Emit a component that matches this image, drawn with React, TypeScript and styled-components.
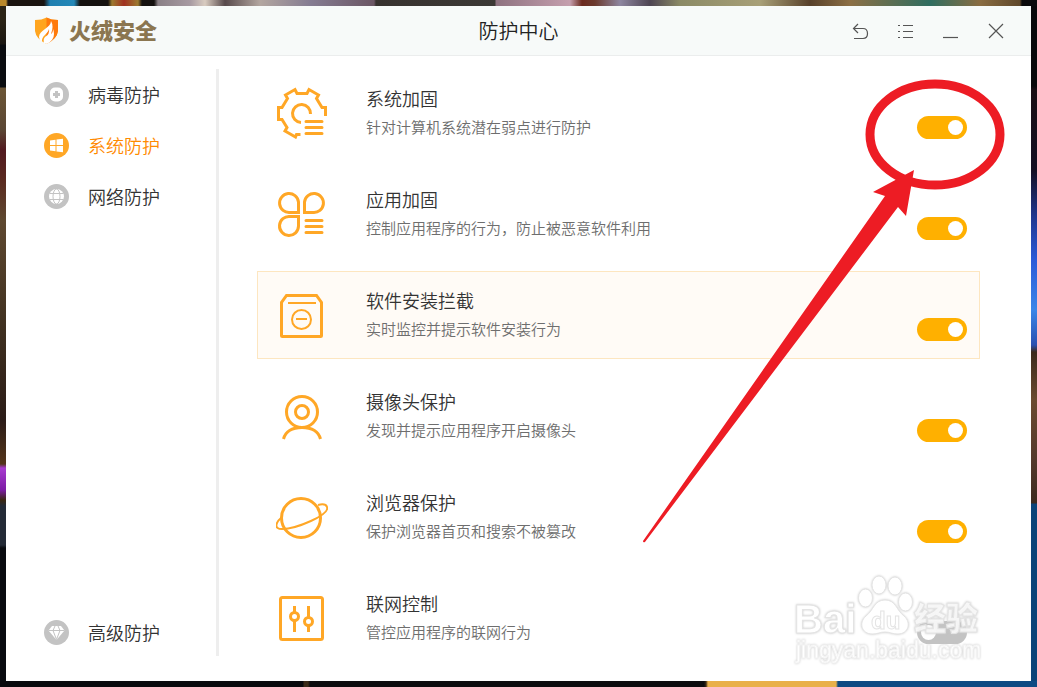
import React, { useState } from "react";
import styled, { createGlobalStyle } from "styled-components";

const GlobalStyle = createGlobalStyle`
  *, *::before, *::after { box-sizing: border-box; }
  body {
    margin: 0;
    font-family: "Noto Sans CJK SC", "Microsoft YaHei", sans-serif;
    font-weight: 350;
    color: #333;
  }
  button { font: inherit; color: inherit; border: 0; padding: 0; background: none; cursor: pointer; }
`;

const Desktop = styled.div`
  min-height: 100vh;
  padding: 6px;
  display: flex;
  background:
    linear-gradient(90deg, #b9882a 0 6px, #1a1410 8px 44px, #1f7fb0 50px, #2388b8 74px, #14110f 80px 108px, #9c7a30 112px, #a03020 124px, #9c7a30 138px, #14110f 142px 154px, #8a8086 158px, #a79aa2 190px, #d8cbc0 205px, #584a4c 225px, #b3a6a0 260px, #857c92 310px, #6b5664 374px, #37322f 376px, #3c3936 495px, #8e7280 496px, #c59fae 570px, #6b2a1e 582px, #6b3a2e 595px, #8e86a0 620px, #4e4553 650px, #8b8a66 680px, #a8a078 760px, #57402a 810px, #8c6f45 850px, #2f6d60 930px, #8a6c42 980px, #5f482b 1020px, #0a0a0c 1022px) top / 100% 6px no-repeat,
    linear-gradient(90deg, #08090d 0 303px, #3a2a18 304px 308px, #0c0c0e 310px 704px, #3a2a16 706px, #e9b04a 708px 836px, #0e4a83 838px 100%) bottom / 100% 6px no-repeat,
    linear-gradient(#2b2416 0 20px, #1b1712 44px, #0a0c10 45px 87px, #6b5535 88px, #5a4634 130px, #521a20 150px, #5a2a20 180px, #5e4830 220px, #3f3020 330px, #2b1c18 420px, #54351a 464px, #a83cd0 468px, #7c1ca4 490px, #3a2712 500px, #232a36 506px 545px, #090b0f 548px 100%) left / 6px 100% no-repeat,
    linear-gradient(#08080a 0 86px, #1a0e14 90px, #140f22 170px, #20358c 215px, #2c5ad8 260px, #3b86e8 310px, #2a50b0 345px, #3c2a1c 352px, #6b4a2f 400px, #54382a 460px, #3c2a1e 503px, #0b4479 504px 100%) right / 6px 100% no-repeat,
    #08090d;
`;

const AppWindow = styled.div`
  position: relative;
  flex: 1;
  min-width: 0;
  display: flex;
  flex-direction: column;
  background: #fff;
`;

const Header = styled.header`
  height: 50px;
  display: grid;
  grid-template-columns: 1fr auto 1fr;
  align-items: center;
  padding: 0 26px;
  background: #f7faf9;
  border-bottom: 1px solid #ebeded;
`;

const Brand = styled.div`
  display: flex;
  align-items: center;
  gap: 10px;
  padding-left: 2px;
  color: #8b7650;
  font-size: 22px;
  line-height: 28px;
  font-weight: 900;
`;

const BrandName = styled.span`
  padding-bottom: 3px;
`;

const Title = styled.h1`
  margin: 0;
  font-size: 20px;
  line-height: 28px;
  font-weight: inherit;
  color: #222;
`;

const WindowActions = styled.div`
  display: flex;
  justify-content: flex-end;
  gap: 27px;
`;

const ActionButton = styled.button`
  width: 18px;
  height: 18px;
  svg { display: block; }
`;

const Body = styled.div`
  flex: 1;
  display: flex;
  padding: 13px 51px 19px 0;
`;

const Sidebar = styled.nav`
  width: 213px;
  flex: none;
  display: flex;
  flex-direction: column;
  gap: 26px;
  margin-bottom: 6px;
  padding: 13px 0 11px 38px;
  border-right: 3px solid #eee;
`;

const NavItem = styled.button<{ $active?: boolean; $last?: boolean }>`
  display: flex;
  align-items: center;
  gap: 19px;
  height: 25px;
  font-size: 18px;
  line-height: 24px;
  color: ${(p) => (p.$active ? "#ff8a00" : "#333")};
  margin-top: ${(p) => (p.$last ? "auto" : "0")};
  svg { display: block; color: ${(p) => (p.$active ? "#ffa726" : "#c3c3c3")}; }
`;

const NavLabel = styled.span`
  padding-bottom: 2px;
`;

const CardList = styled.main`
  flex: 1;
  min-width: 0;
  margin-left: 38px;
  display: flex;
  flex-direction: column;
  gap: 13px;
`;

const Card = styled.section<{ $highlight?: boolean }>`
  display: flex;
  align-items: flex-end;
  height: 88px;
  padding: 17px 12px 17px 18px;
  border: 1px solid ${(p) => (p.$highlight ? "#fde6c0" : "transparent")};
  background: ${(p) => (p.$highlight ? "#fffbf6" : "transparent")};
`;

const CardIcon = styled.svg`
  flex: none;
  width: 52px;
  height: 52px;
  margin-right: 38px;
  fill: none;
  stroke: #ffa726;
  stroke-width: 3;
`;

const CardText = styled.div`
  flex: 1;
  display: flex;
  flex-direction: column;
  gap: 6px;
`;

const CardTitle = styled.h2`
  margin: 0;
  font-size: 18px;
  line-height: 22px;
  font-weight: inherit;
`;

const CardNote = styled.p`
  margin: 0;
  font-size: 15px;
  line-height: 24px;
  color: #6e6e6e;
`;

const Toggle = styled.input`
  appearance: none;
  flex: none;
  width: 50px;
  height: 23px;
  margin: 0;
  padding: 4px;
  display: flex;
  border-radius: 12px;
  background: #c3c3c3;
  cursor: pointer;
  &::before {
    content: "";
    width: 15px;
    height: 15px;
    border-radius: 50%;
    background: #fff;
  }
  &:checked { background: #ffb000; justify-content: flex-end; }
`;

const Annotation = styled.svg`
  position: absolute;
  top: 0;
  right: 0;
  pointer-events: none;
`;

const Watermark = styled.svg`
  position: absolute;
  right: 51px;
  bottom: 14px;
  pointer-events: none;
  filter: drop-shadow(0 0 1px #ccc);
  font-family: "Liberation Sans", "Noto Sans CJK SC", sans-serif;
`;

const Shield = () => (
  <svg width="25" height="28" viewBox="0 0 25 28" aria-hidden="true">
    <path d="M1 3Q8 3 12.500 0.500Q17 3 24 3V14Q23 22 12.500 27Q2 22 1 14Z" fill="#ffa51f" />
    <path d="M12.500 0.500Q17 3 24 3V14Q23 22 12.500 27Z" fill="#ff7a0d" />
    <path d="M17 4C17 11 5 13 5 20Q5 23 8 25C7 19 14 17 15 12Q16 17 11 20Q9 22 10 26L13 27Q20 23 20 17Q20 14 19 12Q19 16 17 17Q20 9 17 4Z" fill="#fff" />
  </svg>
);

const Disc = ({ children }: { children: React.ReactNode }) => (
  <svg width="25" height="25" viewBox="0 0 25 25" aria-hidden="true">
    <circle cx="12.500" cy="12.500" r="12.500" fill="currentColor" />
    {children}
  </svg>
);

const navItems = [
  {
    label: "病毒防护",
    art: (
      <>
        <rect x="6" y="5.500" width="13" height="14" rx="5" fill="#fff" />
        <path d="M12.500 9v7M9 12.500h7" stroke="currentColor" strokeWidth="3" />
      </>
    ),
  },
  {
    label: "系统防护",
    art: <path d="M6 7.500l5.500-.8V12H6zM12.500 6.500L19 5.800V12h-6.500zM6 13h5.500v5.300L6 17.500zM12.500 13H19v6.200l-6.500-.8z" fill="#fff" />,
  },
  {
    label: "网络防护",
    art: (
      <>
        <circle cx="12.500" cy="12.500" r="7.500" fill="#fff" />
        <g fill="none" stroke="currentColor">
          <ellipse cx="12.500" cy="12.500" rx="3.500" ry="7.500" />
          <path d="M5.500 9.500h14M5.500 15.500h14" />
        </g>
      </>
    ),
  },
  {
    label: "高级防护",
    art: (
      <>
        <path d="M8 6h9l3.500 4.500L12.500 20l-8-9.500z" fill="#fff" />
        <path d="M4.500 10.500h16M9 10.500l3.500 9 3.500-9M9 10.500l2-4.500M16 10.500L14 6" fill="none" stroke="currentColor" />
      </>
    ),
  },
];

const cards = [
  {
    id: "system",
    title: "系统加固",
    note: "针对计算机系统潜在弱点进行防护",
    on: true,
    art: (
      <>
        <path d="M24.500 47.500H20.500L19.500 50L9 44L11 40.500L6 32.500H2.500V20.500H6L11.500 11.500L9.500 8L19 2.500L21 6.500H31L33 2.500L42.500 8L40.500 11.500L46 20.500H49.500V29" />
        <path d="M25 35.500A9 9 0 1 1 34.500 27" />
        <path d="M30 34.500h16M30 40.500h16M30 46.500h16" strokeLinecap="round" />
      </>
    ),
  },
  {
    id: "app",
    title: "应用加固",
    note: "控制应用程序的行为，防止被恶意软件利用",
    on: true,
    art: (
      <>
        <path d="M22.500 24.500H14A9.500 9.500 0 1 1 22.500 14zM28.500 24.500H37A9.500 9.500 0 1 0 28.500 14zM22.500 28.500H14A9.500 9.500 0 1 0 22.500 38z" />
        <path d="M30 32.500h16M30 38.500h16M30 44.500h16" strokeLinecap="round" />
      </>
    ),
  },
  {
    id: "install",
    title: "软件安装拦截",
    note: "实时监控并提示软件安装行为",
    on: true,
    highlight: true,
    art: (
      <>
        <path d="M10.500 6.500H40.500L45.500 13.500V46.500Q45.500 47.500 44.500 47.500H6.500Q5.500 47.500 5.500 46.500V13.500Z" />
        <path d="M12 14h28M20 30h11" strokeWidth="2" />
        <circle cx="25.500" cy="30.500" r="9.500" strokeWidth="2" />
      </>
    ),
  },
  {
    id: "camera",
    title: "摄像头保护",
    note: "发现并提示应用程序开启摄像头",
    on: true,
    art: (
      <>
        <circle cx="26" cy="22" r="15.500" />
        <circle cx="26" cy="22" r="6.500" />
        <path d="M7.500 49C10 40 18 37.500 26 37.500S42 40 44.500 49" />
      </>
    ),
  },
  {
    id: "browser",
    title: "浏览器保护",
    note: "保护浏览器首页和搜索不被篡改",
    on: true,
    art: (
      <>
        <circle cx="25" cy="27" r="19.500" />
        <path d="M6 26C-1 32 -2 38 6 38C20 38 54 24 51 16C50 13 46 13 42 14" strokeWidth="2" />
      </>
    ),
  },
  {
    id: "network",
    title: "联网控制",
    note: "管控应用程序的联网行为",
    on: false,
    art: (
      <>
        <rect x="4.500" y="5.500" width="42" height="42" rx="2" />
        <path d="M18.500 14v6M18.500 28v12M32.500 14v12M32.500 33v7" />
        <circle cx="18.500" cy="24.500" r="4" />
        <circle cx="32.500" cy="29.500" r="4" />
      </>
    ),
  },
];

const windowActions = [
  { label: "返回", path: "M6 2L1.500 6.500L6 11M2 6.500H11Q15.500 6.500 15.500 11.500T11 16.500H2" },
  { label: "菜单", path: "M1 3.500h2M6 3.500h10M1 9.500h2M6 9.500h10M1 15.500h2M6 15.500h10" },
  { label: "最小化", path: "M1 15.500h15" },
  { label: "关闭", path: "M2 2l14 14M16 2l-14 14" },
];

export default function App() {
  const [active, setActive] = useState(1);
  const [enabled, setEnabled] = useState<Record<string, boolean>>(
    Object.fromEntries(cards.map((c) => [c.id, c.on]))
  );

  return (
    <>
      <GlobalStyle />
      <Desktop>
        <AppWindow>
          <Header>
            <Brand>
              <Shield />
              <BrandName>火绒安全</BrandName>
            </Brand>
            <Title>防护中心</Title>
            <WindowActions>
              {windowActions.map((a) => (
                <ActionButton key={a.label} aria-label={a.label}>
                  <svg width="18" height="18" viewBox="0 0 18 18" fill="none" stroke="#555" strokeWidth="1.2">
                    <path d={a.path} />
                  </svg>
                </ActionButton>
              ))}
            </WindowActions>
          </Header>
          <Body>
            <Sidebar>
              {navItems.map((item, i) => (
                <NavItem
                  key={item.label}
                  $active={i === active}
                  $last={i === navItems.length - 1}
                  onClick={() => setActive(i)}
                >
                  <Disc>{item.art}</Disc>
                  <NavLabel>{item.label}</NavLabel>
                </NavItem>
              ))}
            </Sidebar>
            <CardList>
              {cards.map((c) => (
                <Card key={c.id} $highlight={c.highlight}>
                  <CardIcon viewBox="0 0 52 52" aria-hidden="true">{c.art}</CardIcon>
                  <CardText>
                    <CardTitle id={c.id}>{c.title}</CardTitle>
                    <CardNote>{c.note}</CardNote>
                  </CardText>
                  <Toggle
                    type="checkbox"
                    role="switch"
                    aria-labelledby={c.id}
                    checked={enabled[c.id]}
                    onChange={(e) => setEnabled({ ...enabled, [c.id]: e.target.checked })}
                  />
                </Card>
              ))}
            </CardList>
          </Body>
          <Watermark width="192" height="94" viewBox="0 0 192 94" fill="#fff" stroke="#e4e4e4">
            <ellipse cx="77.500" cy="25" rx="7" ry="9" />
            <ellipse cx="91" cy="12" rx="7" ry="9" />
            <ellipse cx="107" cy="13" rx="7" ry="9" />
            <ellipse cx="117.500" cy="29" rx="7" ry="9" />
            <path d="M97 27C86 27 86 37 78 43C70 50 74 61 84 61C90 61 92 59 97 59S104 61 110 61C120 61 124 50 116 43C108 37 108 27 97 27Z" />
            <text x="6" y="60" fontSize="40" fontWeight="700">Bai</text>
            <text x="83" y="56" fontSize="24" fontWeight="700">du</text>
            <text x="126" y="57" fontSize="32" fontWeight="900" fillOpacity="0.8">经验</text>
            <text x="8" y="85" fontSize="23" stroke="#f4f4f4">jingyan.baidu.com</text>
          </Watermark>
          <Annotation width="400" height="550" viewBox="0 0 400 550" aria-hidden="true">
            <ellipse cx="304" cy="128.500" rx="65" ry="50.500" fill="none" stroke="#ed1c24" strokeWidth="9" />
            <path d="M283 164L242 186L254 190L12 535Q12 537 14 536L267 201L275 210Z" fill="#ed1c24" />
          </Annotation>
        </AppWindow>
      </Desktop>
    </>
  );
}
